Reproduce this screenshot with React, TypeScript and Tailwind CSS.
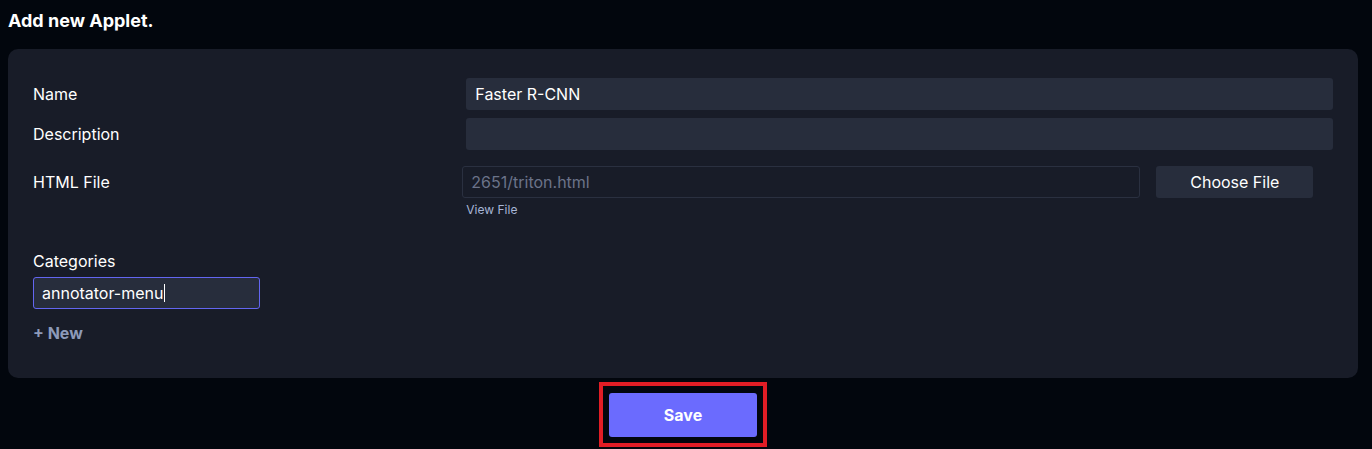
import React from 'react';

export default function App() {
  return (
    <div className="min-h-[449px] w-full bg-[#02060d] text-white font-['Inter','Liberation_Sans',sans-serif] pl-2 pr-[14px] pt-[9px]">
      <h1 className="text-[18px] font-bold leading-6 text-white">Add new Applet.</h1>

      <div className="mt-[16px] rounded-[10px] bg-[#181c28] px-[25px] pt-[29px] pb-[33px]">
        <div className="grid grid-cols-3 items-center gap-y-2">
          <label className="text-[16px] text-white">Name</label>
          <div className="col-span-2 h-8 rounded-[3px] bg-[#272d3c] px-[9px] flex items-center text-[16px] text-white">Faster R-CNN</div>
          <label className="text-[16px] text-white">Description</label>
          <div className="col-span-2 h-8 rounded-[3px] bg-[#272d3c]" />
        </div>

        <div className="mt-4 grid grid-cols-3">
          <label className="text-[16px] text-white h-8 flex items-center">HTML File</label>
          <div className="col-span-2 -ml-1">
            <div className="flex gap-4">
              <div className="h-8 w-[678px] rounded-[3px] border border-[#2a3040] px-[8px] flex items-center text-[16px] text-[#6b7389]">2651/triton.html</div>
              <button className="h-8 w-[157px] rounded-[3px] bg-[#272d3c] text-[16px] text-white">Choose File</button>
            </div>
            <a className="mt-[4px] ml-[4px] block text-[12px] leading-4 text-[#a7b5d6]">View File</a>
          </div>
        </div>

        <div className="mt-[33px]">
          <label className="block text-[16px] text-white leading-5">Categories</label>
          <div className="mt-[6px] h-8 w-[227px] rounded-[3px] border border-[#6366f1] bg-[#272d3c] px-2 flex items-center text-[16px] text-white">
            annotator-menu<span className="ml-px h-[18px] w-px bg-white" />
          </div>
          <div className="mt-[12px] text-[16px] font-bold leading-6 text-[#8d9ab9]">+ New</div>
        </div>
      </div>

      <div className="mt-1 flex justify-center">
        <div className="border-4 border-[#e11d25] px-[6px] pt-[7px] pb-[6px]">
          <button className="h-[44px] w-[148px] rounded-[3px] bg-[#6b6bfe] text-[16px] font-bold text-white">Save</button>
        </div>
      </div>
    </div>
  );
}
